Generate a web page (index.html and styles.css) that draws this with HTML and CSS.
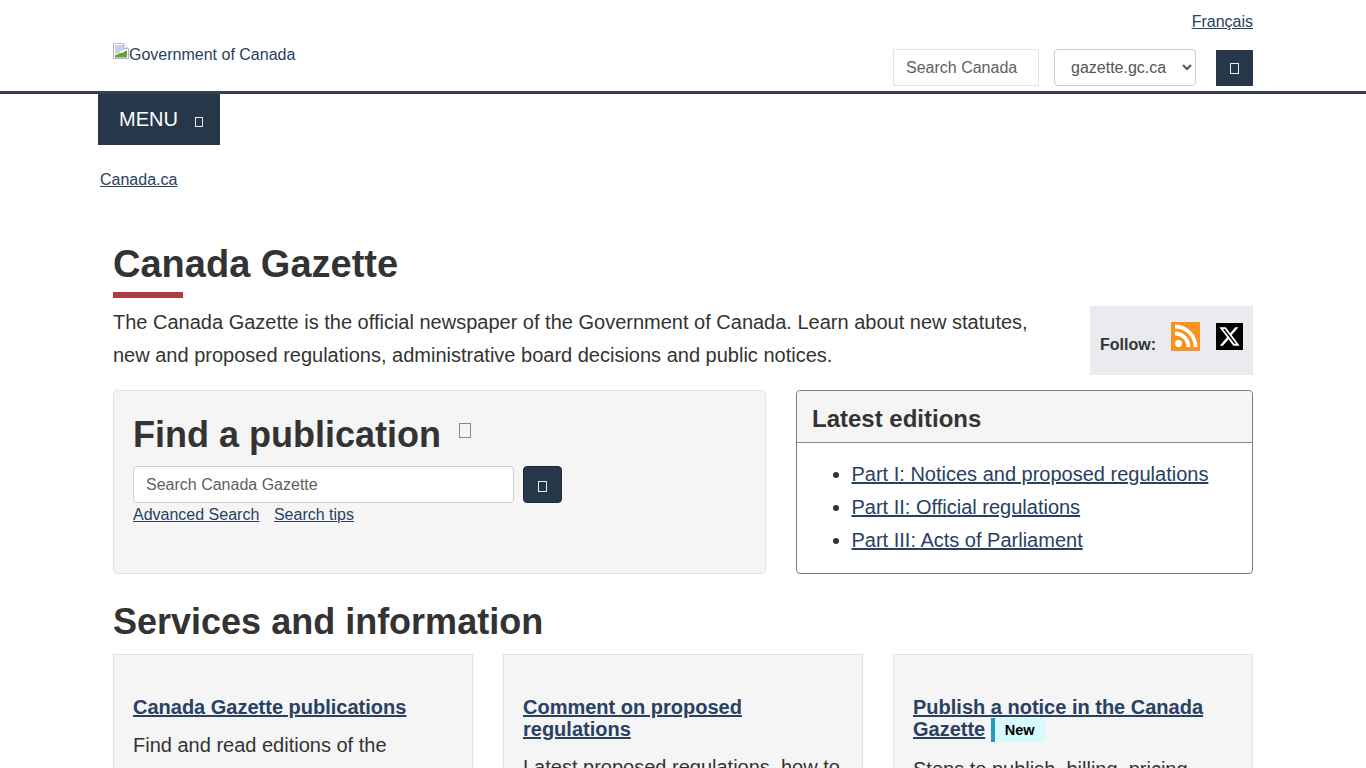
FILE: index.html
```html
<!DOCTYPE html>
<html lang="en">
<head>
<meta charset="utf-8">
<title>Canada Gazette</title>
<link rel="stylesheet" href="styles.css">
</head>
<body>
<header class="site-header">
  <div class="wrap">
    <div class="lang-row"><a href="#">Français</a></div>
    <div class="brand-row">
      <a class="brand" href="#">
        <svg class="broken" width="17" height="16" viewBox="0 0 17 16" aria-hidden="true">
          <path d="M.5.500h10l5 5v10H.5z" fill="#fff" stroke="#b8b8b8"/>
          <path d="M2 2h8v3.500h4L2 11z" fill="#c5d2ea"/>
          <path d="M10.500.500v5h5" fill="#eee" stroke="#b8b8b8"/>
          <path d="M2 14.500v-2.500l4-3 3 1 5-3v7.500z" fill="#62a044"/>
          <path d="M2 12L14 6.500" fill="none" stroke="#fff" stroke-width="1"/>
        </svg><span class="brand-text">Government of Canada</span>
      </a>
      <form class="site-search">
        <input class="top-input" type="text" placeholder="Search Canada">
        <select class="top-select"><option>gazette.gc.ca</option></select>
        <button class="top-btn" type="button"><span class="tofu"></span></button>
      </form>
    </div>
  </div>
</header>
<nav class="nav-wrap">
  <button class="menu-btn" type="button">MENU<span class="tofu tofu-menu"></span></button>
</nav>
<div class="crumbs"><a href="#">Canada.ca</a></div>
<main class="wrap main">
  <h1>Canada Gazette</h1>
  <div class="intro">
    <p>The Canada Gazette is the official newspaper of the Government of Canada. Learn about new statutes, new and proposed regulations, administrative board decisions and public notices.</p>
    <aside class="follow">
      <strong>Follow:</strong>
      <svg class="rss" width="29" height="29" viewBox="0 0 29 29" aria-hidden="true">
        <rect width="29" height="29" fill="#f7941e"/>
        <circle cx="7.500" cy="21.500" r="3.500" fill="#fff"/>
        <path d="M4 11.500A13.500 13.500 0 0 1 17.500 25" fill="none" stroke="#fff" stroke-width="3.800"/>
        <path d="M4 4.500A20.500 20.500 0 0 1 24.500 25" fill="none" stroke="#fff" stroke-width="3.800"/>
      </svg>
      <svg class="xicon" width="27" height="27" viewBox="0 0 27 27" aria-hidden="true">
        <rect width="27" height="27" fill="#000"/>
        <path transform="translate(2.200 2.200) scale(.94)" d="M18.244 2.250h3.308l-7.227 8.260 8.502 11.240H16.170l-5.214-6.817L4.990 21.750H1.680l7.730-8.835L1.254 2.250H8.080l4.713 6.231zm-1.161 17.520h1.833L7.084 4.126H5.117z" fill="#fff"/>
      </svg>
    </aside>
  </div>
  <div class="panels">
    <section class="find">
      <h2 class="find-title">Find a publication<span class="tofu tofu-find"></span></h2>
      <form class="find-form">
        <input class="find-input" type="text" placeholder="Search Canada Gazette">
        <button class="find-btn" type="button"><span class="tofu"></span></button>
      </form>
      <div class="find-links"><a href="#">Advanced Search</a><a href="#">Search tips</a></div>
    </section>
    <section class="latest">
      <h2 class="latest-title">Latest editions</h2>
      <ul>
        <li><a href="#">Part I: Notices and proposed regulations</a></li>
        <li><a href="#">Part II: Official regulations</a></li>
        <li><a href="#">Part III: Acts of Parliament</a></li>
      </ul>
    </section>
  </div>
  <h2 class="services-title">Services and information</h2>
  <div class="cards">
    <article class="card">
      <h3><a href="#">Canada Gazette publications</a></h3>
      <p>Find and read editions of the Canada Gazette.</p>
    </article>
    <article class="card">
      <h3><a href="#">Comment on proposed regulations</a></h3>
      <p>Latest proposed regulations, how to submit your comments.</p>
    </article>
    <article class="card">
      <h3><a href="#">Publish a notice in the Canada Gazette</a> <span class="badge">New</span></h3>
      <p>Steps to publish, billing, pricing information and schedules.</p>
    </article>
  </div>
</main>
</body>
</html>
```
FILE: styles.css
```css
* { box-sizing: border-box; }
html, body { margin: 0; padding: 0; }
body {
  font-family: "Liberation Sans", Arial, sans-serif;
  font-size: 20px;
  line-height: 33px;
  color: #333;
  background: #fff;
}
a { color: #284162; }
.wrap { width: 1140px; margin: 0 auto; }

.site-header { height: 94px; border-bottom: 3px solid #38414d; }
.lang-row { display: flex; justify-content: flex-end; padding-top: 11px; font-size: 16px; line-height: 22px; }
.brand-row { display: flex; justify-content: space-between; padding-top: 10px; }
.brand { display: flex; align-items: flex-start; height: 24px; font-size: 16px; line-height: 22px; color: #284162; text-decoration: none; }
.brand-text { padding-top: 1px; }
.broken { flex: none; margin-right: -1px; }
.site-search { display: flex; align-items: flex-start; margin-top: 6px; }
.top-input {
  width: 146px; height: 37px; padding: 0 12px; border: 1px solid #e3e3e3;
  font: 16px "Liberation Sans", Arial, sans-serif; color: #555; background: #fff; border-radius: 0;
}
.top-input::placeholder, .find-input::placeholder { color: #5f5f5f; opacity: 1; }
.top-select {
  width: 142px; height: 37px; margin-left: 15px; padding: 0 12px; border: 1px solid #ccc; border-radius: 4px;
  font: 16px "Liberation Sans", Arial, sans-serif; color: #555; background: #fff;
}
.top-btn {
  width: 37px; height: 36px; margin-left: 20px; margin-top: 1px; border: 0; background: #26374a;
  display: flex; align-items: center; justify-content: center; padding: 0;
}
.tofu { display: inline-block; width: 9px; height: 11px; border: 1px solid #e8ebee; }

.nav-wrap { width: 1170px; margin: 0 auto; }
.menu-btn {
  display: flex; align-items: center; width: 122px; height: 51px; padding: 0 0 0 21px; border: 0;
  background: #26374a; color: #fff; font: 20px "Liberation Sans", Arial, sans-serif;
}
.tofu-menu { width: 8px; height: 10px; margin-left: 17px; margin-top: 5px; }

.crumbs { width: 1170px; margin: 0 auto; padding: 18px 0 0 2px; font-size: 16px; line-height: 33px; }

.main { padding-top: 40px; }
h1 {
  position: relative; margin: 0; padding-top: 6px; font-size: 38px; line-height: 44px; font-weight: 700; color: #333; height: 62px;
}
h1::after {
  content: ""; position: absolute; left: 0; bottom: 0; width: 70px; height: 6px; background: #af3c43;
}
.intro { display: flex; justify-content: space-between; align-items: flex-start; margin-top: 8px; }
.intro p { margin: 0; width: 930px; }
.follow {
  display: flex; align-items: flex-start; width: 163px; height: 69px; background: #e9ebee;
  padding: 16px 0 0 10px; font-size: 16px; line-height: 44px; color: #333;
}
.follow strong { line-height: 44px; height: 44px; padding-top: 1px; }
.rss { margin-left: 15px; }
.xicon { margin-left: 16px; margin-top: 1px; }

.panels { display: flex; justify-content: space-between; margin-top: 15px; }
.find {
  width: 653px; height: 184px; background: #f5f5f5; border: 1px solid #e3e3e3; border-radius: 4px; padding: 20px 19px 19px;
}
.find-title { margin: 0; display: flex; font-size: 36px; line-height: 48px; font-weight: 700; color: #333; }
.tofu-find { width: 12px; height: 15px; border-color: #8a8a8a; margin-left: 18px; margin-top: 12px; }
.find-form { display: flex; margin-top: 7px; }
.find-input {
  width: 381px; height: 37px; padding: 0 12px; border: 1px solid #ccc; border-radius: 4px;
  font: 16px "Liberation Sans", Arial, sans-serif; color: #555; background: #fff;
}
.find-btn {
  width: 39px; height: 37px; margin-left: 9px; border: 1px solid #1c2b3b; border-radius: 4px; background: #26374a;
  display: flex; align-items: center; justify-content: center; padding: 3px 0 0;
}
.find-links { display: flex; gap: 14.600px; font-size: 16px; line-height: 23px; }
.latest { width: 457px; height: 184px; border: 1px solid #7b7b7b; border-radius: 4px; }
.latest-title { margin: 0; padding: 12px 15px 0; height: 52px; font-size: 24px; line-height: 32px; font-weight: 700; border-bottom: 1px solid #8a8a8a; background: #f5f5f5; border-radius: 4px 4px 0 0; color: #333; }
.latest ul { margin: 15px 0 0; padding: 0 0 0 54.500px; }

.services-title { margin: 26px 0 0; font-size: 36px; line-height: 44px; font-weight: 700; color: #333; }
.cards { display: grid; grid-template-columns: repeat(3, 360px); gap: 30px; margin-top: 10px; }
.card { background: #f5f5f5; border: 1px solid #e3e3e3; padding: 41px 19px 19px; }
.card h3 { margin: 0; font-size: 20px; line-height: 22px; font-weight: 700; }
.card p { margin: 11px 0 0; }
.badge {
  display: inline-block; height: 24px; padding: 0 10px 0 10px; border-left: 4px solid #269abc; background: #d7faff;
  color: #000; font-size: 14.500px; line-height: 24px; font-weight: 700; vertical-align: top;
}
```
